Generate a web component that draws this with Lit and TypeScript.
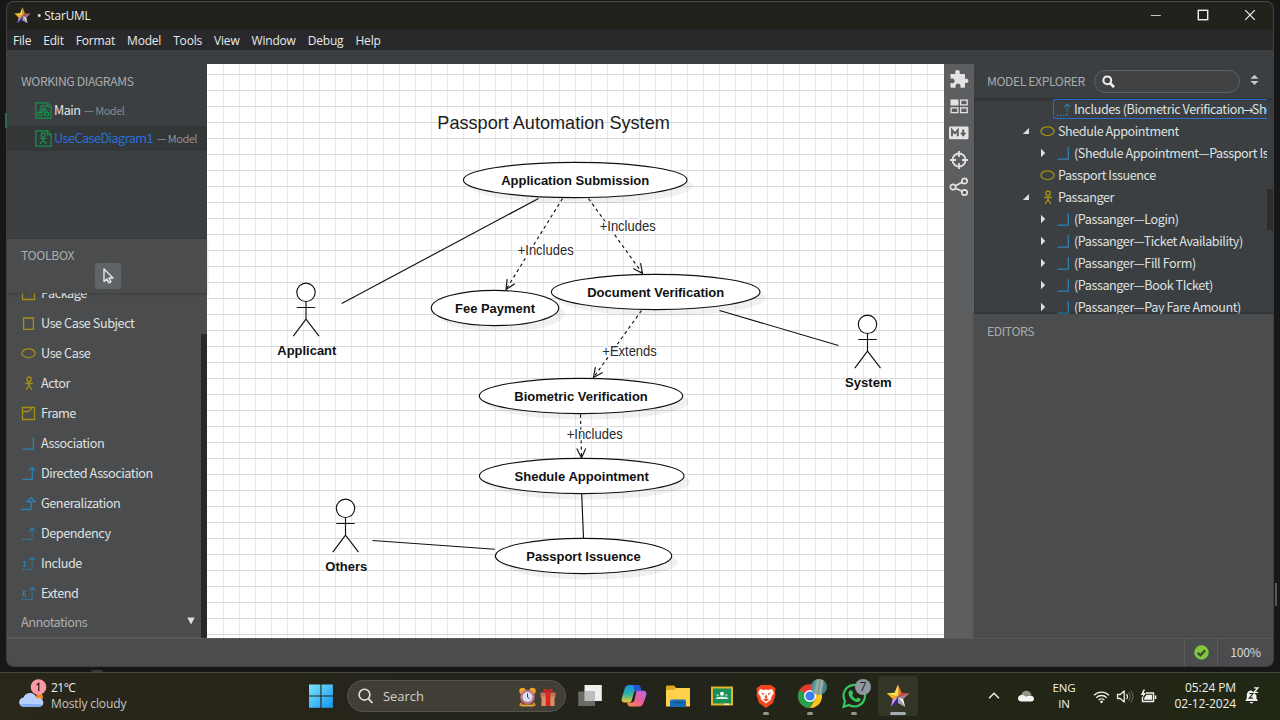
import { LitElement, html, css, svg, nothing } from "lit";
import { customElement, property } from "lit/decorators.js";

const box = (w: number, h: number, body: unknown) =>
  html`<svg width=${w} height=${h} viewBox="0 0 ${w} ${h}" fill="none">${body}</svg>`;

const YELLOW = "#a39112";
const BLUE = "#2a84b8";
const GREEN = "#12924b";

const glyphs: Record<string, unknown> = {
  package: svg`<path d="M1.500 3.500h7v3h5v7h-12z" stroke=${YELLOW} stroke-width="1.3"/>`,
  subject: svg`<path d="M2.600 2h9.800v11.300H2.600z" stroke=${YELLOW} stroke-width="1.3"/>`,
  usecase: svg`<ellipse cx="7.500" cy="7.200" rx="6.600" ry="4.400" stroke=${YELLOW} stroke-width="1.3"/>`,
  actor: svg`<g stroke=${YELLOW} stroke-width="1.3"><circle cx="8" cy="3.200" r="2.200"/><path d="M8 5.400v4.400M4.200 7.500h7.600M8 9.600l-3 4.200M8 9.600l3 4.200"/></g>`,
  frame: svg`<g stroke=${YELLOW} stroke-width="1.3"><path d="M1.500 1.500h12v12h-12z"/><path d="M1.500 5.500h5.500l3-2v-2"/></g>`,
  association: svg`<path d="M12.300 1.200v12M1.500 13.200h11.300" stroke=${BLUE} stroke-width="1.3"/>`,
  directed: svg`<path d="M11.300 1.800v11.600M1.500 13.400h9.800M8 4.200l3.300-2.600 3.200 2.600" stroke=${BLUE} stroke-width="1.3"/>`,
  generalization: svg`<path d="M10.200 5.500v8M0 13.500h10.200M6 5.600l4.200-3.900 4.200 3.900z" stroke=${BLUE} stroke-width="1.3"/>`,
  dependency: svg`<g stroke=${BLUE}><path d="M11.200 2.500v11M1 13.400h10" stroke-width="1.2" stroke-dasharray="1.5 1.4"/><path d="M8.400 5l2.800-2.600L14 5" stroke-width="1.2"/></g>`,
  include: svg`<g stroke=${BLUE}><path d="M11.200 2.500v11M1 13.400h10" stroke-width="1.2" stroke-dasharray="1.5 1.4"/><path d="M8.400 4l2.800-2.400L14 4M1.800 5.500h3.600M1.800 10h3.600M3.600 5.500V10" stroke-width="1.1"/></g>`,
  extend: svg`<g stroke=${BLUE}><path d="M11.200 2.500v11M1 13.400h10" stroke-width="1.2" stroke-dasharray="1.5 1.4"/><path d="M8.400 4l2.800-2.400L14 4M5 5.300H2.300V10H5M2.300 7.600h2.400" stroke-width="1.1"/></g>`,
};
const glyph = (name: string) => box(15, 15, glyphs[name]);

const star = (size: number) => html`<svg width=${size} height=${size} viewBox="0 0 24 24">
  <path d="M12 .5L15.500 8.700 12 13z" fill="#e98d25"/><path d="M12 .5L8.500 8.700 12 13z" fill="#ffd95a"/>
  <path d="M.5 9.200L8.500 8.700l3.500 4.300z" fill="#ffe95a"/><path d="M.5 9.200L6.800 15 12 13z" fill="#f8b21b"/>
  <path d="M23.500 9.200L15.500 8.700 12 13z" fill="#d2433f"/><path d="M23.500 9.200L17.200 15 12 13z" fill="#a0809a"/>
  <path d="M4.800 23L6.800 15 12 13z" fill="#d9a0e8"/><path d="M4.800 23L12 19V13z" fill="#3f2599"/>
  <path d="M19.200 23L17.200 15 12 13z" fill="#f1eef2"/><path d="M19.200 23L12 19V13z" fill="#a9a5b3"/>
</svg>`;

const docIcon = (kind: string) => box(17, 17, svg`<g stroke=${GREEN} stroke-width="1.2">
  <path d="M.8.8h11.700l3.600 3.600v11.700H.8z"/><path d="M12.300.8v3.800h3.800"/>
  ${kind === "class"
    ? svg`<path d="M6 3.800h4.200v3.100H6zM2.900 10.700h4v2.800h-4zM9.700 10.700h4v2.800h-4zM8.100 6.900v2H4.900v1.800M8.100 8.900h3.600v1.800"/>`
    : svg`<circle cx="8.200" cy="4.900" r="2.100"/><path d="M8.200 7v3.500M4.600 8.500h7.200M8.200 10.300l-3.200 3.700M8.200 10.300l3.200 3.700"/>`}
</g>`);

@customElement("working-diagrams")
class WorkingDiagrams extends LitElement {
  static styles = css`
    :host { display: block; height: 189px; box-sizing: border-box; padding-top: 21px; background: #3b3f41; }
    .title { height: 20px; line-height: 20px; padding-left: 14px; color: #a9acad; font-size: 12.2px; letter-spacing: -0.38px; }
    .list { padding-top: 5px; }
    .row { height: 28px; display: flex; align-items: center; padding-left: 28px; color: #e4e6e7; font-size: 12.6px; letter-spacing: -0.5px; white-space: nowrap; }
    .row svg { margin-right: 2px; flex: none; }
    .row span { margin-top: -2px; }
    .row.on { background: #333737; color: #2a70dc; height: 25px; margin-top: 2px; }
    .row .owner { color: #85898b; font-size: 11px; margin-left: 3.5px; margin-top: -1px; }
    .on .owner { color: #8d9192; }
  `;
  render() {
    return html`<div class="title">WORKING DIAGRAMS</div>
      <div class="list">
        <div class="row">${docIcon("class")}<span>Main</span><span class="owner">— Model</span></div>
        <div class="row on">${docIcon("usecase")}<span>UseCaseDiagram1</span><span class="owner">— Model</span></div>
      </div>`;
  }
}

const tools: [string, string][] = [
  ["package", "Package"], ["subject", "Use Case Subject"], ["usecase", "Use Case"], ["actor", "Actor"],
  ["frame", "Frame"], ["association", "Association"], ["directed", "Directed Association"],
  ["generalization", "Generalization"], ["dependency", "Dependency"], ["include", "Include"], ["extend", "Extend"],
];

@customElement("tool-box")
class ToolBox extends LitElement {
  static styles = css`
    :host { flex: 1; min-height: 0; display: flex; flex-direction: column; background: #4b4c4e; }
    .head { height: 54px; flex: none; box-shadow: 0 1px 3px rgba(0,0,0,.2); z-index: 1; display: flex; flex-direction: column; }
    .title { height: 24px; line-height: 32px; padding-left: 14px; color: #abaeb0; font-size: 12.2px; letter-spacing: -0.35px; }
    .pick { width: 26px; height: 26px; border-radius: 4px; background: #606467; margin-left: 88px; display: grid; place-items: center; }
    .body { flex: 1; min-height: 0; overflow: hidden; display: flex; }
    .items { flex: 1; display: flex; flex-direction: column; justify-content: flex-end; }
    .row { height: 30px; flex: none; display: flex; align-items: center; gap: 5px; padding-left: 14px; color: #dfe1e2; font-size: 12.7px; letter-spacing: -0.46px; }
    .row span, .group span { margin-top: -2px; }
    .group { height: 30px; flex: none; display: flex; justify-content: space-between; align-items: center; padding: 0 6px 1px 14px; box-sizing: border-box; color: #abaeb0; font-size: 12.7px; letter-spacing: -0.5px; border-bottom: 1px solid #5a5b5d; }
    .group svg { margin-top: -2px; }
    .track { width: 6px; margin-top: 41px; background: #28292a; }
  `;
  render() {
    return html`<div class="head">
        <div class="title">TOOLBOX</div>
        <div class="pick">${box(14, 18, svg`<path d="M3 2v12.500l2.900-2.600 2 4 2-1-1.900-3.900h4z" stroke="#e6e8e9" stroke-width="1.400" stroke-linejoin="round"/>`)}</div>
      </div>
      <div class="body">
        <div class="items">
          ${tools.map(([i, t]) => html`<div class="row">${glyph(i)}<span>${t}</span></div>`)}
          <div class="group"><span>Annotations</span>${box(8, 8, svg`<path d="M.3.500h7.400L4 7.500z" fill="#dcdedf"/>`)}</div>
        </div>
        <div class="track"></div>
      </div>`;
  }
}

interface Oval { x: number; y: number; rx: number; text: string; w: number; }
const ovals: Oval[] = [
  { x: 575.2, y: 180, rx: 111.8, text: "Application Submission", w: 148 },
  { x: 495, y: 308, rx: 63.7, text: "Fee Payment", w: 80 },
  { x: 655.7, y: 292, rx: 104.3, text: "Document Verification", w: 137 },
  { x: 581, y: 396, rx: 101.7, text: "Biometric Verification", w: 133.5 },
  { x: 581.7, y: 476, rx: 102.3, text: "Shedule Appointment", w: 134.5 },
  { x: 583.5, y: 556, rx: 88.2, text: "Passport Issuence", w: 114.5 },
];
const actors = [
  { x: 306, y: 292.3, text: "Applicant", w: 59 },
  { x: 867.5, y: 324.3, text: "System", w: 46.5 },
  { x: 345.5, y: 508.3, text: "Others", w: 42 },
];
const solid = [[538.5, 198.5, 341.7, 303.5], [719.5, 310.5, 838.5, 345.5], [581.7, 494, 583.5, 538], [372.5, 540.5, 495, 549.3]];
const dashed = [[562.5, 198.5, 506, 289.5], [588.5, 198.5, 642.5, 273.5], [641.5, 310.5, 593.5, 377.5], [580.5, 414.5, 581.5, 458]];
const tags = [
  { x: 517.7, y: 255, t: "+Includes", w: 56 }, { x: 599.7, y: 231, t: "+Includes", w: 56 },
  { x: 602.3, y: 356, t: "+Extends", w: 54.5 }, { x: 566.7, y: 439, t: "+Includes", w: 56 },
];
const head = ([x1, y1, x2, y2]: number[]) => {
  const a = Math.atan2(y2 - y1, x2 - x1);
  const p = (d: number) => `${x2 - 10.5 * Math.cos(a + d)} ${y2 - 10.5 * Math.sin(a + d)}`;
  return `M${p(0.44)}L${x2} ${y2}L${p(-0.44)}`;
};

@customElement("diagram-canvas")
class DiagramCanvas extends LitElement {
  static styles = css`
    :host { display: block; width: 737px; height: 574px; background: #fff; }
    svg { display: block; }
    text { font-family: "Liberation Sans", Arial, sans-serif; fill: #111; }
    .name { font-size: 13.7px; font-weight: 700; }
    .tag { font-size: 13.8px; fill: #2a2a2a; stroke: #fff; stroke-width: 3px; stroke-opacity: .85; paint-order: stroke; }
    .title { font-size: 18.2px; fill: #1c1c1c; }
  `;
  render() {
    return html`<svg width="737" height="574" viewBox="207 64 737 574" fill="none" stroke="#111" stroke-width="1.15">
      ${Array.from({ length: 45 }, (_, i) => svg`<path d="M${223.5 + i * 16} 64v574" stroke="#e9e9e9" stroke-width="1"/>`)}
      ${Array.from({ length: 36 }, (_, i) => svg`<path d="M207 ${74.5 + i * 16}h737" stroke="#d9d9d9" stroke-width="1"/>`)}
      ${ovals.map((o) => svg`<ellipse cx=${o.x + 6} cy=${o.y + 6} rx=${o.rx} ry="17.600" fill="#000" fill-opacity=".055" stroke="none"/>
        <ellipse cx=${o.x} cy=${o.y} rx=${o.rx} ry="17.600" fill="#fff"/>
        <text class="name" stroke="none" x=${o.x - o.w / 2} y=${o.y + 5} textLength=${o.w} lengthAdjust="spacingAndGlyphs">${o.text}</text>`)}
      ${solid.map(([a, b, c, d]) => svg`<path d="M${a} ${b}L${c} ${d}"/>`)}
      ${dashed.map((l) => svg`<path stroke-dasharray="3.200 3.200" d="M${l[0]} ${l[1]}L${l[2]} ${l[3]}"/><path d=${head(l)}/>`)}
      ${tags.map((t) => svg`<text class="tag" x=${t.x} y=${t.y} textLength=${t.w} lengthAdjust="spacingAndGlyphs">${t.t}</text>`)}
      ${actors.map((a) => svg`<g transform="translate(${a.x} ${a.y})"><circle r="9.200" fill="#fff"/>
        <path d="M0 9.200v17.600M-9.200 15.200H9.200M0 26.800l-12.700 17M0 26.800l13 17"/>
        <text class="name" stroke="none" x=${0.8 - a.w / 2} y="62.700" textLength=${a.w} lengthAdjust="spacingAndGlyphs">${a.text}</text></g>`)}
      <text class="title" stroke="none" x="437.300" y="129.300" textLength="232.500" lengthAdjust="spacingAndGlyphs">Passport Automation System</text>
    </svg>`;
  }
}

const arrow = html`<span class="arrow">→</span>`;
const tree: [number, string, string, unknown][] = [
  [1053, "", "dependency", html`Includes (Biometric Verification${arrow}Shedule`],
  [1022, "open", "usecase", "Shedule Appointment"],
  [1038, "closed", "association", "(Shedule Appointment—Passport Issuence)"],
  [1022, "", "usecase", "Passport Issuence"],
  [1022, "open", "actor", "Passanger"],
  [1038, "closed", "association", "(Passanger—Login)"],
  [1038, "closed", "association", "(Passanger—Ticket Availability)"],
  [1038, "closed", "association", "(Passanger—Fill Form)"],
  [1038, "closed", "association", "(Passanger—Book TIcket)"],
  [1038, "closed", "association", "(Passanger—Pay Fare Amount)"],
];

@customElement("model-explorer")
class ModelExplorer extends LitElement {
  static styles = css`
    :host { flex: 1; display: flex; flex-direction: column; background: #3b3f41; min-width: 0; }
    .head { height: 34px; flex: none; display: flex; align-items: center; padding: 0 14px 0 13px; box-sizing: border-box; margin-top: 14px; color: #a9acad; font-size: 12.2px; white-space: nowrap; }
    .head > svg { margin-top: -3px; }
    .title { width: 107px; letter-spacing: -0.42px; flex: none; }
    .search { width: 146px; height: 23px; flex: none; box-sizing: border-box; border: 1px solid #5e6162; border-radius: 12px; background: #414243; display: flex; align-items: center; padding: 1px 0 0 7px; margin: 0 10px 0 0; }
    .tree { height: 216px; display: flex; overflow: hidden; box-shadow: inset 0 2px 3px rgba(0,0,0,.2); }
    .rows { width: 294px; overflow: hidden; }
    .row { height: 22px; display: flex; align-items: center; white-space: nowrap; color: #dfe1e2; font-size: 12.6px; letter-spacing: -0.42px; }
    .d16 { padding-left: 64px; } .d0 { padding-left: 48px; }
    .sel { height: 20px; margin: 1px 0 1px 79px; padding-left: 2px; box-sizing: border-box; border: 1px solid #2b6cc4; border-right: 0; border-radius: 3px 0 0 3px; }
    .twist { width: 18px; height: 10px; flex: none; }
    .twist svg, .ico svg { display: block; }
    .ico { width: 18px; flex: none; }
    .text { margin-top: -2px; }
    .arrow { font: 12px "DejaVu Sans", sans-serif; margin: 0 -1px; }
    .bar { width: 6px; height: 41px; margin-top: 91px; background: #2a2c2d; }
    .editors { flex: 1; background: #4b4c4e; color: #a9acad; font-size: 12.2px; letter-spacing: -0.42px; padding: 8px 13px; box-shadow: 0 -1px 3px rgba(0,0,0,.25); }
  `;
  render() {
    return html`<div class="head"><span class="title">MODEL EXPLORER</span>
        <div class="search">${box(13, 13, svg`<circle cx="5.300" cy="5.300" r="3.900" stroke="#eee" stroke-width="2"/><path d="M8 8l4 4.200" stroke="#eee" stroke-width="2.600"/>`)}</div>
        ${box(10, 12, svg`<path d="M5 .3l4.500 4.400H.5zM5 11.500L9.500 7.200H.5z" fill="#c6c8c9"/>`)}</div>
      <div class="tree"><div class="rows">
        ${tree.map(([x, tw, ico, t]) => html`<div class="row ${x === 1053 ? "sel" : x === 1038 ? "d16" : "d0"}">
          ${x === 1053 ? nothing : html`<span class="twist">${box(10, 10, tw === "open" ? svg`<path d="M7 2v6H.8z" fill="#dcdedf"/>` : tw ? svg`<path d="M3 .8L7.200 5 3 9.200z" fill="#dcdedf"/>` : nothing)}</span>`}
          <span class="ico">${glyph(ico)}</span><span class="text">${t}</span></div>`)}
      </div><div class="bar"></div></div>
      <div class="editors">EDITORS</div>`;
  }
}

@customElement("side-rail")
class SideRail extends LitElement {
  static styles = css`
    :host { width: 30px; height: 574px; background: #5d5e60; display: flex; flex-direction: column; align-items: center; gap: 7px; padding-top: 5px; box-sizing: border-box; }
    svg { display: block; flex: none; }
  `;
  render() {
    const c = "#e2e3e4";
    return html`
      ${box(20, 20, svg`<path fill=${c} d="M1.500 5H6.200C6.500 4.500 6.200 4.200 6.200 3.300 6.200 1.900 7.200 1 8.500 1s2.300.9 2.300 2.300c0 .9-.3 1.200 0 1.700h4.400c.5 0 .8.3.8.8v3.800c.4.300.8.100 1.400.1 1.200 0 2 .9 2 2.100s-.8 2.100-2 2.100c-.6 0-1-.2-1.400.1v3.900c0 .5-.3.800-.8.800h-3.700c-.3-.5 0-1 0-1.700 0-1.600-1.100-2.500-2.500-2.500S6.500 15.400 6.500 17c0 .7.300 1.200 0 1.700H2.300c-.5 0-.8-.3-.8-.8v-3.700c.4-.3 1 0 1.600 0 1.500 0 2.500-.9 2.500-2.300S4.600 9.600 3.100 9.600c-.6 0-1.200.3-1.600 0z"/>`)}
      ${box(20, 20, svg`<path fill=${c} d="M1.500 3.500h8v6h-8z"/><path stroke=${c} stroke-width="1.300" d="M11.600 4.100h6.600v4.800h-6.600zM2.100 11.900h6.800v4.800H2.100zM11.600 11.900h6.600v4.800h-6.600z"/>`)}
      ${box(20, 20, svg`<rect x="0" y="3.500" width="19.500" height="12.800" rx="1.200" fill=${c}/><path d="M3 13.300V7l2.900 3.300L8.800 7v6.300" stroke="#5d5e60" stroke-width="1.900"/><path d="M14.200 6.500v4" stroke="#5d5e60" stroke-width="2"/><path d="M11 9.800h6.400l-3.200 3.900z" fill="#5d5e60"/>`)}
      ${box(20, 20, svg`<circle cx="10" cy="10" r="6.500" stroke=${c} stroke-width="1.800"/><path d="M10 1v6M10 13v6M1 10h6M13 10h6" stroke=${c} stroke-width="1.800"/>`)}
      ${box(20, 20, svg`<g stroke=${c} stroke-width="1.700"><circle cx="4" cy="10" r="2.700"/><circle cx="15.500" cy="4" r="2.700"/><circle cx="15.500" cy="15.500" r="2.700"/><path d="M6.400 8.700l6.700-3.500M6.400 11.200l6.700 3"/></g>`)}`;
  }
}

@customElement("task-bar")
class TaskBar extends LitElement {
  @property() clock = "05:24 PM";
  static styles = css`
    :host { display: flex; align-items: center; height: 48px; box-sizing: border-box; border-top: 1px solid #45463c; background: linear-gradient(90deg, #29261a, #24241a 45%, #212715); font-family: "Open Sans", "Noto Sans", sans-serif; color: #f0f0ec; font-size: 12px; white-space: nowrap; padding-bottom: 1px; }
    svg { display: block; flex: none; }
    .weather { display: flex; width: 308px; flex: none; box-sizing: border-box; padding-left: 18px; gap: 4px; align-items: center; line-height: 16px; }
    .weather .t { letter-spacing: -0.5px; }
    .weather .s { color: #c6c6c0; letter-spacing: -0.12px; }
    .apps { display: flex; align-items: center; width: 680px; flex: none; }
    .start { width: 39px; flex: none; }
    .search { width: 219px; height: 32px; flex: none; box-sizing: border-box; border: 1px solid #55544a; border-radius: 16px; background: #413f35; display: flex; align-items: center; padding: 0 9px 0 10px; color: #d2d1cb; font-size: 12.9px; gap: 10px; }
    .search .w { flex: 1; }
    .search .gifts { display: flex; gap: 4px; margin-top: 1px; }
    .app { width: 44px; height: 42px; flex: none; position: relative; display: grid; place-items: center; }
    .app.first { margin-left: 2px; }
    .app::after { content: ""; position: absolute; left: 19px; top: 37px; width: 6px; height: 3px; border-radius: 2px; background: transparent; }
    .app.run::after { background: #96958c; }
    .app.on { background: #333527; border-radius: 4px; width: 40px; height: 40px; margin-left: 2px; }
    .app.on::after { left: 12px; width: 16px; top: 36px; background: #a4adb1; }
    .badge { position: absolute; left: 23px; top: 4px; width: 16px; height: 16px; border-radius: 8px; background: #8d989f; color: #1d2226; text-align: center; font-size: 12px; line-height: 16px; }
    .photo { background: linear-gradient(100deg, #4f8f94 20%, #9fb3a3 40%, #6d9b96 50%, #b0b39e 62%, #3f7f86 75%); }
    .tray { display: flex; align-items: center; flex: 1; }
    .cloud { margin-left: 17px; }
    .lang { width: 40px; text-align: center; margin: 0 9px; line-height: 16px; font-size: 11.5px; letter-spacing: -0.1px; }
    .net { display: flex; gap: 6px; }
    .clock { text-align: right; width: 79px; line-height: 16px; font-size: 12px; letter-spacing: -0.1px; margin-right: 8px; }
  `;
  render() {
    return html`<div class="weather">
        ${box(29, 36, svg`<circle cx="21.500" cy="19" r="3.500" fill="#f08a2c"/><path d="M7 29C3.500 29 1.200 27 1.200 24.200c0-2.500 1.900-4.300 4.300-4.600C6.500 16.500 9 15 12 15c3.500 0 5.800 2.200 6.400 5 4-.5 7 1.400 7 4.600 0 2.800-2 4.400-4.900 4.400z" fill="#b5d0fb"/><path d="M2 26.500c5-1 14-.5 23 0-.8 1.600-2.500 2.500-4.500 2.500H7c-2.300 0-4-.8-5-2.500z" fill="#84adf0"/><circle cx="20.500" cy="9" r="7.800" fill="#fb9aa5"/><path d="M18.600 7l2.200-1.700v8" stroke="#35252a" stroke-width="1.300"/>`)}
        <div><div class="t">21°C</div><div class="s">Mostly cloudy</div></div></div>
      <div class="apps">
        <div class="start">${box(26, 24, svg`<defs><linearGradient id="w" x1="0" y1="0" x2="1" y2="1"><stop stop-color="#7fe3fd"/><stop offset="1" stop-color="#1296ee"/></linearGradient></defs><path fill="url(#w)" d="M1 .5h11.400v11H1zM13.500.5h11.400v11H13.500zM1 12.500h11.400v11.300H1zM13.500 12.500h11.400v11.300H13.500z"/>`)}</div>
        <div class="search">${box(15, 16, svg`<circle cx="6.500" cy="6.700" r="5.400" stroke="#e2e1dc" stroke-width="1.600"/><path d="M10.500 10.800l4 4.200" stroke="#e2e1dc" stroke-width="1.800"/>`)}<span class="w">Search</span>
          <span class="gifts">${box(17, 20, svg`<path d="M2.500 16l-1.200 3M14.500 16l1.200 3" stroke="#df8a1c" stroke-width="2.500"/><circle cx="3.500" cy="4" r="3.200" fill="#f3a42b"/><circle cx="13.500" cy="4" r="3.200" fill="#f3a42b"/><circle cx="8.500" cy="10" r="7.300" fill="#b97384"/><circle cx="8.500" cy="10" r="5" fill="#dce0f4"/><path d="M8.500 6.500V10l2 2" stroke="#43364c"/><path d="M2.500 17.500h12v2h-12z" fill="#eaa33e"/>`)}
          ${box(16, 20, svg`<path fill="#bd7451" d="M.5 5.500h15v5H.5z"/><path fill="#d49466" d="M1.500 9.500h13V19h-13z"/><path fill="#dd2424" d="M5.800 5h4.600v14H5.800z"/><path d="M8 5C6 1.500 3.500 2 4.500 5M8 5c2-3.500 4.500-3 3.500 0" stroke="#dd2424" stroke-width="1.800"/>`)}</span></div>
        <div class="app first">${box(26, 24, svg`<path d="M7.500 1h17.300v16H7.500z" fill="#efefed"/><path d="M1.300 7.500H18V22H1.300z" fill="#747674" fill-opacity=".88"/><path d="M7.500 7.500H18V17H7.500z" fill="#bcbcba"/>`)}</div>
        <div class="app">${box(26, 24, svg`<defs><linearGradient id="ca" x1="0" y1="0" x2="0" y2="1"><stop stop-color="#1c8cf0"/><stop offset=".5" stop-color="#2bb3a5"/><stop offset="1" stop-color="#f2c62d"/></linearGradient><linearGradient id="cb" x1="1" y1="0" x2="0" y2="1"><stop stop-color="#b26bf1"/><stop offset=".5" stop-color="#ee5b94"/><stop offset="1" stop-color="#fb9441"/></linearGradient></defs><path d="M8 1h8.500c2 0 2.500 1 3 3l.8 3h-4c-2 0-2.700 1-3.300 3l-1.800 6c-.6 2-1.500 2.500-3.500 2.500H4c-3 0-4-2-3-5.300L3.800 4.500C4.500 2.200 5.700 1 8 1z" fill="url(#ca)"/><path d="M12 1h5c1.500 0 2.300 1 2.700 3l.6 3h-4l-2.500 1z" fill="#2058ce"/><path d="M18 22.500H9.500c-2 0-2.700-1-3.200-3l-.3-1h3c2 0 2.800-1 3.300-3l2-6.500c.6-1.700 1.500-2.200 3.400-2.200H22c3 0 4 2 3 5.200l-2.700 7.500c-.8 2-2 3-4.300 3z" fill="url(#cb)"/><path d="M15.300 7.300h-1.800L10.600 17c-.3.900-.8 1.500-1.700 1.500h2.300c1.300-.2 1.900-1.200 2.400-2.700z" fill="#24241a"/>`)}</div>
        <div class="app">${box(26, 24, svg`<path d="M1 3c0-1 .6-1.500 1.500-1.500H9l2.500 2.700H23c1.200 0 2 .6 2 1.800V21H1z" fill="#e2a51e"/><path d="M1 6l8-.2L11.500 4H25v18.500H1z" fill="#ffd04d"/><path d="M5 23v-5.500C5 16 6 15.500 7.500 15.500h11c1.500 0 2.500.5 2.500 2V23z" fill="#166cb8"/><path d="M8 18.500h10" stroke="#0b467e"/>`)}</div>
        <div class="app">${box(24, 22, svg`<path d="M1 1.500h22v19H1z" fill="#e3b52c"/><path d="M3 3.500h18v15H3z" fill="#188f57"/><circle cx="12" cy="8.700" r="2" fill="#fff"/><circle cx="7.700" cy="10.200" r="1.300" fill="#8ac6a6"/><circle cx="16.300" cy="10.200" r="1.300" fill="#8ac6a6"/><path d="M5.500 14c0-1.500 3-2.300 6.500-2.300s6.500.8 6.500 2.300z" fill="#dcefe4"/><path d="M14 18.500h5v1.500h-5z" fill="#f3e8c3"/>`)}</div>
        <div class="app run">${box(22, 26, svg`<path d="M6 2h10l2.500 2 2 1-.5 4 .5 3-2.500 8-7 5-7-5-2.500-8L2 9l-.5-4 2-1z" fill="#f5451f"/><path d="M5 6l3.500 1L11 6.500l2.500.5L17 6l2 4-2.500 3.500-.5 3-5 4-5-4-.5-3L3 10z" fill="#fff"/><path d="M6 9.500l3 1-.5 2zM16 9.500l-3 1 .5 2zM11 11l1.500 3.500L11 15.500l-1.500-1zM8 16.500l3-1.200 3 1.200-3 2z" fill="#f5451f"/>`)}</div>
        <div class="app run">${box(26, 26, svg`<circle cx="13" cy="13" r="12" fill="#e53a2d"/><path d="M13 13L2.600 7A12 12 0 0 0 13 25l5-9z" fill="#27a04a"/><path d="M13 25A12 12 0 0 0 24.500 9.500H13l5.500 6.500z" fill="#fbc51d"/><circle cx="13" cy="13" r="6" fill="#fff"/><circle cx="13" cy="13" r="4.600" fill="#3b7cf2"/>`)}<span class="badge photo"></span></div>
        <div class="app run">${box(26, 26, svg`<path d="M2.500 23.800L4 18A10.700 10.700 0 1 1 8 22z" stroke="#32c85d" stroke-width="2.200"/><path d="M9 7.500l1.800-.2 1.400 3.200-1.200 1.600c1 2 2.300 3.200 4.200 4.100l1.500-1.600 3 1.400c.2 2-1.700 3-3.300 3-4.500-.5-8.700-5-8.900-8.500 0-1.200.6-2.300 1.500-3z" fill="#32c85d"/>`)}<span class="badge">7</span></div>
        <div class="app on">${star(24)}</div>
      </div>
      <div class="tray">
        ${box(12, 12, svg`<path d="M1 8.300l5-5 5 5" stroke="#eee" stroke-width="1.500"/>`)}
        <span class="cloud">${box(18, 14, svg`<path d="M4 8C4 4 6.500 1.800 9.500 1.800c2.500 0 4.500 1.600 5 4.200z" fill="#92958d"/><path d="M4.500 12.500C2.400 12.500 1 11.200 1 9.400 1 7.500 2.500 6 4.600 6c2 0 3 .6 4.400 1.500 3-1.700 8-1.200 8 2.200 0 1.700-1.200 2.800-3 2.800z" fill="#f4f4f2"/>`)}</span>
        <div class="lang">ENG<br />IN</div>
        <div class="net">
          ${box(17, 15, svg`<path d="M1 6.300a10.500 10.500 0 0 1 15 0M3.300 8.700a7.300 7.300 0 0 1 10.400 0M5.600 11a4.200 4.200 0 0 1 5.800 0" stroke="#eee" stroke-width="1.300"/><circle cx="8.500" cy="12.800" r="1.400" fill="#eee"/>`)}
          ${box(18, 15, svg`<path d="M1.500 5.500h2.700l4-3.500v11l-4-3.500H1.500z" stroke="#eee" stroke-width="1.300" stroke-linejoin="round"/><path d="M10.500 5a4 4 0 0 1 0 5" stroke="#eee" stroke-width="1.200"/><path d="M12.500 3a7 7 0 0 1 0 9M14.700 1.500a10 10 0 0 1 0 12" stroke="#6c7066"/>`)}
          ${box(17, 15, svg`<path d="M6 4h7.500v8.500H2.500V8" stroke="#eee" stroke-width="1.400"/><path d="M6.500 5.800H12v5H4.200V9z" fill="#eee"/><path d="M15.500 6.500v3.500" stroke="#eee" stroke-width="1.600"/><path d="M3.500.5L.8 6h2.400L2 9.500 6 4H3.800L5 .5z" fill="#eee"/>`)}
        </div>
        <div class="clock">${this.clock}<br />02-12-2024</div>
        ${box(16, 18, svg`<path d="M7.500 3.500c-3 0-4.700 2-4.700 4.600v3.200L1.200 14h12.700l-1.500-2.700V8z" fill="#f2f2f0"/><path d="M5.500 15a2.100 2.100 0 0 0 4 0z" fill="#f2f2f0"/><path d="M5.300 6.500h3.600l-3.600 4.700h3.600" stroke="#242718" stroke-width="1.200"/><path d="M10 .8h4l-4 4.500h4" stroke="#f2f2f0" stroke-width="1.300"/>`)}
      </div>`;
  }
}

@customElement("app-root")
class AppRoot extends LitElement {
  static styles = css`
    :host { display: flex; flex-direction: column; width: 1280px; height: 720px; box-sizing: border-box; overflow: hidden; background: #171718; font-family: "Noto Sans CJK SC", "Noto Sans CJK JP", sans-serif; padding-top: 1px; position: relative; }
    .win { width: 1268px; height: 666px; margin-left: 6px; margin-bottom: 5px; box-sizing: border-box; border: 1px solid #3f403f; border-top-color: #494a47; border-radius: 8px; overflow: hidden; display: flex; flex-direction: column; flex: none; background: #4b4c4e; }
    .caption { height: 28px; flex: none; background: #20221b; display: flex; align-items: center; padding: 0 17px 2px 7px; box-sizing: border-box; color: #f0f0ee; font: 11.8px "Open Sans", "Noto Sans", sans-serif; letter-spacing: -0.15px; }
    .caption svg { display: block; }
    .name { margin-left: 6px; flex: 1; }
    .controls { display: flex; gap: 35px; }
    .menu { height: 20px; flex: none; background: #29292c; display: flex; align-items: center; gap: 12px; padding: 0 0 0 6px; box-sizing: border-box; color: #e8e9e9; font: 12px "Open Sans", "Noto Sans", sans-serif; letter-spacing: -0.19px; }
    .main { height: 588px; flex: none; display: flex; background: #3b3f41; }
    .left { width: 200px; flex: none; display: flex; flex-direction: column; }
    .mid { width: 767px; flex: none; display: flex; padding-top: 14px; box-sizing: border-box; }
    .status { flex: 1; border-top: 1px solid #58595b; display: flex; justify-content: flex-end; color: #d7d9da; font-size: 12.2px; letter-spacing: -0.3px; }
    .cell { border-left: 1px solid #5b5c5e; display: grid; place-items: center; }
    .ok { width: 32px; } .zoom { width: 55px; padding-bottom: 2px; }
    .mark { position: absolute; left: 5px; top: 113px; width: 2px; height: 15px; background: #2c6b48; }
    .thumb { position: absolute; left: 1275px; top: 583px; width: 2px; height: 23px; background: #55585a; }
    .hint { position: absolute; left: 91px; top: 670px; width: 12px; height: 2px; border-radius: 3px 3px 0 0; background: #3c3835; }
  `;
  render() {
    return html`<div class="win">
        <div class="caption">${star(17)}<span class="name">• StarUML</span>
          <div class="controls">
            ${box(12, 12, svg`<path d="M.8 6.500h10" stroke="#c6c7c4"/>`)}
            ${box(12, 12, svg`<rect x="1.300" y="1.300" width="9.400" height="9.400" stroke="#f2f2f0" stroke-width="1.400"/>`)}
            ${box(12, 12, svg`<path d="M1.200 1.200l9.600 9.600M10.800 1.200l-9.600 9.600" stroke="#f2f2f0" stroke-width="1.200"/>`)}
          </div></div>
        <div class="menu">${["File", "Edit", "Format", "Model", "Tools", "View", "Window", "Debug", "Help"].map((m) => html`<span>${m}</span>`)}</div>
        <div class="main">
          <div class="left"><working-diagrams></working-diagrams><tool-box></tool-box></div>
          <div class="mid"><diagram-canvas></diagram-canvas><side-rail></side-rail></div>
          <model-explorer></model-explorer>
        </div>
        <div class="status">
          <div class="cell ok">${box(15, 15, svg`<circle cx="7.500" cy="7.500" r="7.200" fill="#82c73c"/><path d="M3.700 7.800l2.700 2.600 4.800-5.200" stroke="#3d4a35" stroke-width="2.300"/>`)}</div>
          <div class="cell zoom">100%</div>
        </div>
      </div>
      <task-bar></task-bar>
      <span class="mark"></span><span class="thumb"></span><span class="hint"></span>`;
  }
}
